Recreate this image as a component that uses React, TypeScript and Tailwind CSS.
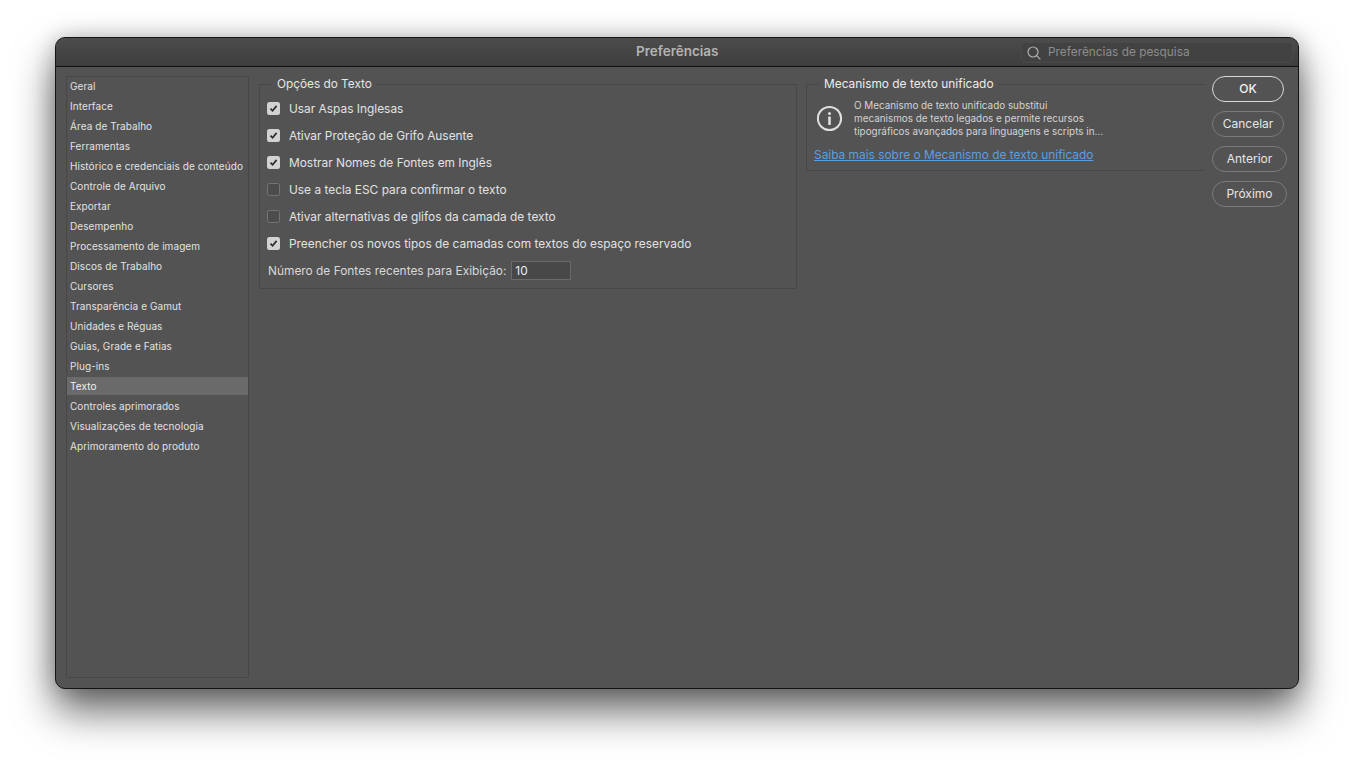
import React from "react";

const nav = ["Geral","Interface","Área de Trabalho","Ferramentas","Histórico e credenciais de conteúdo","Controle de Arquivo","Exportar","Desempenho","Processamento de imagem","Discos de Trabalho","Cursores","Transparência e Gamut","Unidades e Réguas","Guias, Grade e Fatias","Plug-ins","Texto","Controles aprimorados","Visualizações de tecnologia","Aprimoramento do produto"];

const opts: [string, boolean][] = [
  ["Usar Aspas Inglesas", true],
  ["Ativar Proteção de Grifo Ausente", true],
  ["Mostrar Nomes de Fontes em Inglês", true],
  ["Use a tecla ESC para confirmar o texto", false],
  ["Ativar alternativas de glifos da camada de texto", false],
  ["Preencher os novos tipos de camadas com textos do espaço reservado", true],
];

function Check({ on }: { on: boolean }) {
  return on ? (
    <span className="flex h-[13px] w-[13px] items-center justify-center rounded-[2.5px] bg-[#d2d2d2]">
      <svg width="9" height="9" viewBox="0 0 9 9" fill="none"><path d="M1.5 4.6 3.6 6.8 7.6 1.9" stroke="#2e2e2e" strokeWidth="1.7" /></svg>
    </span>
  ) : (
    <span className="h-[13px] w-[13px] rounded-[2.5px] border border-[#757575] bg-[#4c4c4c]" />
  );
}

function Btn({ label, w, strong }: { label: string; w: string; strong?: boolean }) {
  return (
    <button className={`flex h-[26px] items-center justify-center rounded-full text-[12px] ${w} ${strong ? "border border-[#d8d8d8] font-medium text-[#f2f2f2]" : "border border-[#7b7b7b] text-[#e6e6e6]"}`}>{label}</button>
  );
}

export default function App() {
  return (
    <div className="h-[762px] w-[1354px] overflow-hidden bg-white pl-[55px] pt-[37px] font-['Inter',sans-serif]">
      <div className="flex h-[652px] w-[1244px] flex-col overflow-hidden rounded-[10px] border border-[#141414] bg-[#535353] shadow-[0_22px_40px_rgba(0,0,0,0.6),0_0_22px_rgba(0,0,0,0.22)]">
        <header className="flex h-[29px] shrink-0 items-center border-b border-[#111] bg-gradient-to-b from-[#4c4c4c] to-[#3e3e3e]">
          <div className="mb-px w-[965px] pl-[580px]">
            <span className="block w-[82px] whitespace-nowrap text-[13.5px] font-semibold text-[#b4b4b4]">Preferências</span>
          </div>
          <div className="mt-px flex h-[21px] w-[272px] items-center rounded-[4px] border border-[#4a4a4a] bg-[#424242] pl-[5px] text-[11.85px] text-[#8d8d8d]">
            <svg width="14" height="14" viewBox="0 0 14 14" fill="none" stroke="#b0b0b0" strokeWidth="1.2"><circle cx="6" cy="6" r="5" /><path d="M9.6 9.6 13.4 13.4" /></svg>
            <span className="ml-[7px]">Preferências de pesquisa</span>
          </div>
        </header>
        <main className="flex min-h-0 flex-1 pl-[10px] pt-[9px]">
          <nav className="h-[602px] w-[183px] shrink-0 border border-[#474747]">
            {nav.map((n) => (
              <div key={n} className={`flex items-center whitespace-nowrap pl-[3px] text-[10px] tracking-[0.07px] ${n === "Texto" ? "mb-[2px] h-[18px] bg-[#6a6a6a] text-[#f0f0f0]" : "h-[20px] pb-[2px] text-[#e2e2e2]"}`}>{n}</div>
            ))}
          </nav>
          <fieldset className="ml-[10px] h-[213px] w-[538px] shrink-0 border border-[#474747] pl-[7px]">
            <legend className="ml-[5px] pl-[5px] pr-[4px] text-[11.8px] leading-[16px] text-[#e6e6e6]">Opções do Texto</legend>
            <div className="flex flex-col pt-[3px]">
              {opts.map(([t, on]) => (
                <label key={t} className="flex h-[27px] items-center gap-[9px] whitespace-nowrap text-[11.9px] text-[#e2e2e2]">
                  <Check on={on} />
                  <span>{t}</span>
                </label>
              ))}
              <div className="flex h-[27px] items-center whitespace-nowrap pl-px text-[11.9px] text-[#d8d8d8]">
                <span>Número de Fontes recentes para Exibição:</span>
                <span className="ml-[5px] flex h-[19px] w-[60px] items-center border border-[#6a6a6a] bg-[#484848] pl-[3px] text-[#ececec]">10</span>
              </div>
            </div>
          </fieldset>
          <fieldset className="ml-[9px] h-[95px] w-[398px] shrink-0 border-y border-l border-[#474747] pl-[7px]">
            <legend className="ml-[5px] pl-[5px] pr-[4px] text-[11.9px] leading-[16px] text-[#ececec]">Mecanismo de texto unificado</legend>
            <div className="flex items-center pl-[2px] pt-[7px]">
              <svg width="27" height="27" viewBox="0 0 27 27" fill="none"><circle cx="13.5" cy="13.5" r="11.6" stroke="#dedede" strokeWidth="2" /><circle cx="13.5" cy="8.4" r="1.5" fill="#dedede" /><rect x="12.2" y="11.6" width="2.6" height="8.4" rx="0.6" fill="#dedede" /></svg>
              <p className="ml-[11px] whitespace-nowrap text-[9.9px] leading-[13px] text-[#d4d4d4]">
                O Mecanismo de texto unificado substitui<br />mecanismos de texto legados e permite recursos<br />tipográficos avançados para linguagens e scripts in...
              </p>
            </div>
            <a className="mt-[9px] block whitespace-nowrap text-[11.9px] leading-[15px] text-[#5a9fe0] underline">Saiba mais sobre o Mecanismo de texto unificado</a>
          </fieldset>
          <aside className="ml-[8px] flex w-[76px] shrink-0 flex-col gap-[9px]">
            <Btn label="OK" w="w-[72px]" strong />
            <Btn label="Cancelar" w="w-[72px]" />
            <Btn label="Anterior" w="w-[75px]" />
            <Btn label="Próximo" w="w-[75px]" />
          </aside>
        </main>
      </div>
    </div>
  );
}
